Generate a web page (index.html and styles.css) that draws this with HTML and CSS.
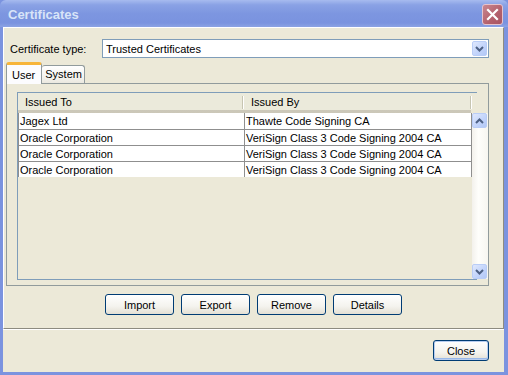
FILE: index.html
```html
<!DOCTYPE html>
<html lang="en">
<head>
  <meta charset="UTF-8" />
  <title>Certificates</title>
  <link rel="stylesheet" href="styles.css">
</head>
<body>
  <div class="window">
    <div class="titlebar">
      <span class="title">Certificates</span>
      <span class="close-x">
        <svg width="13" height="13" viewBox="0 0 13 13"><path d="M2 2 L11 11 M11 2 L2 11" stroke="#fff" stroke-width="2.2" stroke-linecap="square"/></svg>
      </span>
    </div>

    <div class="client">
      <div class="main">
        <div class="type-row">
          <span class="label">Certificate type:</span>
          <div class="combo">
            <span class="combo-text">Trusted Certificates</span>
            <span class="arrow-btn combo-btn">
              <svg width="9" height="6" viewBox="0 0 9 6"><path d="M1 1 L4.5 4.5 L8 1" fill="none" stroke="#4d6185" stroke-width="2"/></svg>
            </span>
          </div>
        </div>

        <div class="tabs">
          <div class="tab active">User</div>
          <div class="tab">System</div>
        </div>

        <div class="tab-panel">
          <div class="scroll-pane">
            <div class="thead">
              <div class="th col1">Issued To</div>
              <div class="th col2">Issued By</div>
            </div>
            <div class="corner"></div>
            <div class="rows">
              <div class="row"><div class="td col1">Jagex Ltd</div><div class="td col2">Thawte Code Signing CA</div></div>
              <div class="row"><div class="td col1">Oracle Corporation</div><div class="td col2">VeriSign Class 3 Code Signing 2004 CA</div></div>
              <div class="row"><div class="td col1">Oracle Corporation</div><div class="td col2">VeriSign Class 3 Code Signing 2004 CA</div></div>
              <div class="row"><div class="td col1">Oracle Corporation</div><div class="td col2">VeriSign Class 3 Code Signing 2004 CA</div></div>
            </div>
            <div class="scrollbar">
              <span class="arrow-btn">
                <svg width="9" height="6" viewBox="0 0 9 6"><path d="M1 5 L4.5 1.5 L8 5" fill="none" stroke="#4d6185" stroke-width="2"/></svg>
              </span>
              <span class="arrow-btn">
                <svg width="9" height="6" viewBox="0 0 9 6"><path d="M1 1 L4.5 4.5 L8 1" fill="none" stroke="#4d6185" stroke-width="2"/></svg>
              </span>
            </div>
          </div>
        </div>

        <div class="actions">
          <button class="btn">Import</button>
          <button class="btn">Export</button>
          <button class="btn">Remove</button>
          <button class="btn">Details</button>
        </div>
      </div>

      <div class="footer">
        <button class="btn btn-default">Close</button>
      </div>
    </div>
  </div>
</body>
</html>
```

FILE: styles.css
```css
* {
  box-sizing: border-box;
}

body {
  margin: 0;
  font-family: 'Liberation Sans', Arial, sans-serif;
  font-size: 11px;
  color: #000;
}

.window {
  width: 508px;
  height: 375px;
  display: flex;
  flex-direction: column;
  padding: 0 4px 3px 3px;
  background: #7b93df;
}

/* Title bar (inactive XP look) */
.titlebar {
  height: 27px;
  margin: 0 -4px 0 -3px;
  padding: 0 5px 0 8px;
  display: flex;
  align-items: center;
  justify-content: space-between;
  background: linear-gradient(#a7bbef 0%, #8aa2e5 18%, #7d96e0 50%, #7a93df 85%, #8ca3e4 100%);
  border-radius: 6px 6px 0 0;
}

.title {
  font-weight: bold;
  font-size: 13px;
  color: #d8e4f8;
  padding-top: 1px;
}

.close-x {
  width: 21px;
  height: 21px;
  display: flex;
  align-items: center;
  justify-content: center;
  border: 1px solid #e6c3cc;
  border-radius: 3px;
  background: linear-gradient(135deg, #c98790, #b3606c 60%, #a85564);
  margin-top: 1px;
}

.client {
  flex: 1;
  display: flex;
  flex-direction: column;
  background: #ece9d8;
}

.main {
  height: 302px;
  display: flex;
  flex-direction: column;
  padding: 11px 13px 0 1px;
  border: 1px solid;
  border-color: #fff #8d8b80 #8d8b80 #fff;
  box-shadow: 0 1px 0 #fff;
}

.type-row {
  display: flex;
  align-items: center;
  padding-left: 5px;
}

.label {
  width: 92px;
}

.combo {
  width: 387px;
  height: 19px;
  display: flex;
  align-items: center;
  justify-content: space-between;
  background: #fff;
  border: 1px solid #7f9db9;
  padding: 0 1px 0 3px;
}

.arrow-btn {
  width: 15px;
  height: 15px;
  display: flex;
  align-items: center;
  justify-content: center;
  border: 1px solid #b9cdf7;
  border-radius: 2px;
  background: linear-gradient(135deg, #dfe8fd, #c1d3fb 60%, #b3c8f5);
}

/* Tabs */
.tabs {
  display: flex;
  align-items: flex-end;
  height: 21px;
  margin: 4px 0 0 1px;
}

.tab {
  height: 18px;
  padding: 2px 2px 0 3px;
  border: 1px solid #919b9c;
  border-bottom: none;
  border-left: none;
  border-radius: 3px 3px 0 0;
  background: linear-gradient(#fff, #f3f2ec 70%, #eae8df);
}

.tab.active {
  height: 22px;
  padding: 4px 6px 0 5px;
  margin-bottom: -1px;
  border-left: 1px solid #919b9c;
  border-top: 3px solid #f7b53a;
  background: #fcfcfe;
  position: relative;
  z-index: 1;
}

.tab-panel {
  height: 203px;
  margin: 0 1px 0 1px;
  padding: 8px 11px 6px 10px;
  border: 1px solid #919b9c;
  background: #ece9d8;
}

.scroll-pane {
  height: 188px;
  display: grid;
  grid-template-columns: 1fr 16px;
  grid-template-rows: 20px 1fr;
  border: 1px solid #7f9db9;
}

.thead {
  display: flex;
  background: #ebeadb;
  border-bottom: 3px solid;
  border-image: linear-gradient(#e2decd, #d6d2c2 40%, #cbc7b8) 1;
  width: 453px;
}

.th {
  position: relative;
  padding: 3px 0 0 7px;
}

.th::after {
  content: '';
  position: absolute;
  right: 0;
  top: 3px;
  bottom: 1px;
  width: 1px;
  background: #c7c5b2;
  box-shadow: 1px 0 0 #fff;
}

.col1 {
  width: 225px;
}

.col2 {
  flex: 1;
}

.th.col2 {
  padding-left: 8px;
}

.corner {
  background: #ece9d8;
}

.rows {
  width: 454px;
}

.row {
  display: flex;
  height: 16px;
  background: #fff;
  border-right: 1px solid #8f8f8f;
}

.row + .row {
  border-top: 1px solid #8f8f8f;
}

.td {
  padding: 1px 0 0 1px;
  line-height: 14px;
  border-left: 1px solid #8f8f8f;
  white-space: nowrap;
}

.td.col1 {
  width: 226px;
}

.scrollbar {
  display: flex;
  flex-direction: column;
  justify-content: space-between;
  background: linear-gradient(90deg, #f3f1ec, #fefefb 40%, #f7f6f0);
  padding-right: 1px;
}

/* Buttons */
.actions {
  display: flex;
  justify-content: center;
  gap: 7px;
  margin: 8px -12px 0 0;
}

.btn {
  width: 69px;
  height: 21px;
  font-family: 'Liberation Sans', Arial, sans-serif;
  font-size: 11px;
  color: #000;
  padding: 0;
  border: 1px solid #003c74;
  border-radius: 3px;
  background: linear-gradient(#fff, #f4f3ee 60%, #e3e0d4);
}

.footer {
  display: flex;
  justify-content: flex-end;
  padding: 11px 15px 0 0;
}

.btn-default {
  width: 56px;
  box-shadow: inset 0 0 0 1px #b8cdef, inset 0 -1px 0 1px #98b8ea;
}
```
